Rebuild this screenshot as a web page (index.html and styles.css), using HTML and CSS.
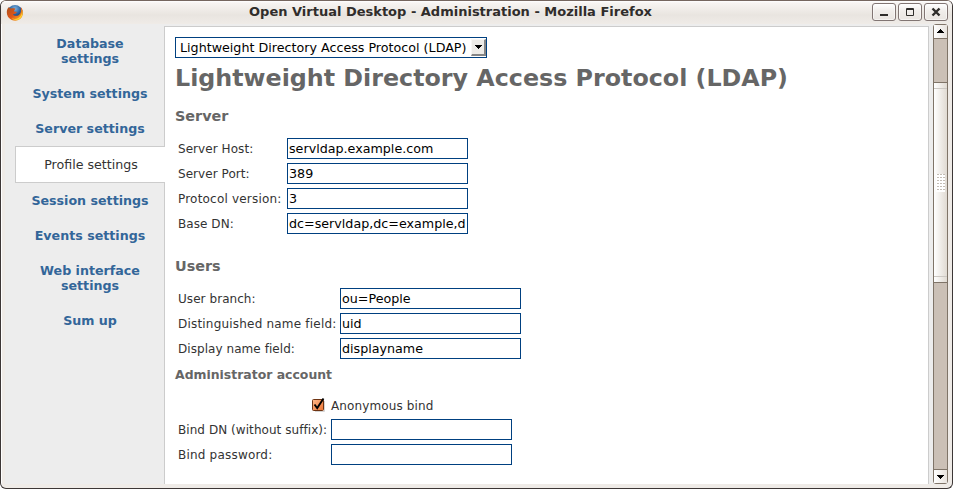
FILE: index.html
```html
<!DOCTYPE html>
<html lang="en">
<head>
<meta charset="utf-8">
<title>Open Virtual Desktop - Administration</title>
<link rel="stylesheet" href="styles.css">
</head>
<body>
<div class="window">
  <header class="titlebar">
    <svg class="logo" width="18" height="18" viewBox="0 0 18 18">
      <defs>
        <radialGradient id="globe" cx=".5" cy=".25" r=".7"><stop offset="0" stop-color="#7db4e4"/><stop offset=".5" stop-color="#2c639f"/><stop offset="1" stop-color="#112c5c"/></radialGradient>
        <linearGradient id="fox" x1="0" y1="0" x2="1" y2="1"><stop offset="0" stop-color="#a9501f"/><stop offset=".5" stop-color="#df5618"/><stop offset="1" stop-color="#ffc629"/></linearGradient>
      </defs>
      <circle cx="9" cy="8.5" r="7.6" fill="url(#globe)"/>
      <path d="M2.5 3.2C0 6 .5 11 2.8 13.7c3.300 3.800 9 4 12.200 .5 2.300-2.500 2.500-7 .7-9.900l-1.100-1c1 3 .4 6.500-2 7.900-2.200 1.300-5 .5-5.600-1l2.800-.7 1.200-1.500-3-.5c.1-1.500.8-2 1.700-2.800C7.500 4 6 4.200 5 4.500 4 4 3.500 3.800 2.500 3.200z" fill="url(#fox)"/>
      <path d="M15.300 4.500c1.500 4 0 7.500-3 9.500-2 1.200-4.500 1.200-6.500.3 2.500 2.300 6.500 2.200 8.800-.2 2.400-2.500 2.400-6.600.7-9.600z" fill="#ffd22e"/>
    </svg>
    <h1 class="title">Open Virtual Desktop - Administration - Mozilla Firefox</h1>
    <div class="controls">
      <span class="control"><svg width="22" height="16"><path d="M7 11h8" stroke="#2f2d2b" stroke-width="2"/></svg></span>
      <span class="control"><svg width="22" height="16"><path d="M7.500 4.500h7v7h-7zM7 5.500h8" stroke="#2f2d2b" fill="none"/></svg></span>
      <span class="control"><svg width="22" height="16"><path d="M7.500 4.500l7 7M14.500 4.500l-7 7" stroke="#2f2d2b" stroke-width="2.400"/></svg></span>
    </div>
  </header>
  <div class="page">
    <nav class="menu">
      <a class="item">Database<br>settings</a>
      <a class="item">System settings</a>
      <a class="item">Server settings</a>
      <a class="item active">Profile settings</a>
      <a class="item">Session settings</a>
      <a class="item">Events settings</a>
      <a class="item">Web interface<br>settings</a>
      <a class="item">Sum up</a>
    </nav>
    <main class="content">
      <div class="select"><span class="value">Lightweight Directory Access Protocol (LDAP)</span><span class="drop"><svg width="12" height="14"><path d="M3 5h7v1h-1v1h-1v1h-1v1h-1v-1h-1v-1h-1v-1h-1z" fill="#000"/></svg></span></div>
      <h1 class="heading">Lightweight Directory Access Protocol (LDAP)</h1>
      <h2 class="section">Server</h2>
      <div class="form server">
        <label>Server Host:</label><div class="field">servldap.example.com</div>
        <label>Server Port:</label><div class="field">389</div>
        <label class="wide">Protocol version:</label><div class="field">3</div>
        <label>Base DN:</label><div class="field">dc=servldap,dc=example,d</div>
      </div>
      <h2 class="section users-title">Users</h2>
      <div class="form users">
        <label>User branch:</label><div class="field">ou=People</div>
        <label class="wide">Distinguished name field:</label><div class="field">uid</div>
        <label>Display name field:</label><div class="field">displayname</div>
      </div>
      <h3 class="subsection">Administrator account</h3>
      <div class="form account">
        <span class="check"><svg width="14" height="15"><defs><linearGradient id="tick" x2="1" y2="1"><stop stop-color="#ffb98b"/><stop offset="1" stop-color="#ed7433"/></linearGradient></defs><path d="M12.500 4v10.500H3" stroke="#d5d5d5" fill="none"/><rect x=".5" y="2.500" width="11" height="11" rx="1" fill="url(#tick)" stroke="#6e3413"/><path d="M2.500 7.500l2.700 3.500L11.500 1.500" stroke="#000" stroke-width="1.900" fill="none"/></svg></span><label class="anonymous">Anonymous bind</label>
        <label>Bind DN (without suffix):</label><div class="field"></div>
        <label class="wide">Bind password:</label><div class="field"></div>
      </div>
    </main>
    <div class="scrollbar">
      <span class="arrow up"><svg width="13" height="13"><path d="M3 8h7v-1h-1v-1h-1v-1h-1v-1h-1v1h-1v1h-1v1h-1z" fill="#000"/></svg></span>
      <span class="track before"></span>
      <span class="thumb"><span class="grip"></span></span>
      <span class="track after"></span>
      <span class="arrow down"><svg width="13" height="13"><path d="M3 5h7v1h-1v1h-1v1h-1v1h-1v-1h-1v-1h-1v-1h-1z" fill="#000"/></svg></span>
    </div>
  </div>
</div>
</body>
</html>
```

FILE: styles.css
```css
* { box-sizing: border-box; }
html, body { height: 100%; margin: 0; overflow: hidden; }
body { background: #fff; font: 12px/15px "DejaVu Sans", sans-serif; color: #333; }
h1, h2, h3 { margin: 0; }
svg { display: block; }
.window { width: 953px; height: 489px; border: 1px solid #3d3736; border-top-color: #75665f; border-radius: 6px; background: #efebe7; box-shadow: inset 1px 1px #fff; padding: 0 4px 4px; overflow: hidden; }
.titlebar { height: 23px; display: flex; align-items: flex-start; margin: 0 -4px; padding-left: 5px; background: linear-gradient(#fff 0, #f7f4f2 2px, #e9e5e0 14px, #efebe7); }
.logo { margin-top: 3px; }
.title { flex: 1; margin-left: 5px; padding-top: 3px; text-align: center; font-size: 13px; line-height: 15px; color: #302d2b; white-space: nowrap; }
.controls { display: flex; gap: 2px; padding: 2px 4px 0 0; }
.control { width: 24px; height: 18px; border: 1px solid #817573; border-radius: 3px; background: linear-gradient(#fff, #f0edea 45%, #e9e5e1); box-shadow: inset 0 0 0 1px #fff8; }
.page { display: flex; height: 460px; background: #ededed; }
.menu { width: 159px; padding: 12px 0 0 10px; text-align: center; }
.item { display: block; margin-bottom: 20px; padding-left: 1px; font-size: 12.65px; font-weight: bold; line-height: 15px; color: #369; }
.item.active { height: 37px; margin: -10px -1px 10px 0; padding: 10px 0 0 1px; border: 1px solid #ccc; border-right: 0; background: #fff; color: #333; font-weight: normal; position: relative; }
.content { width: 765px; margin-top: 2px; padding: 10px; border: 1px solid #ccc; border-bottom: 0; background: #fff; }
.select { display: flex; justify-content: space-between; width: 312px; height: 21px; border: 1px solid #004080; padding: 1px 0 1px 4px; color: #000; font-size: 12.7px; line-height: 17px; white-space: nowrap; }
.drop { width: 15px; height: 17px; background: #edebe7; border: solid; border-width: 1px 2px 2px 1px; border-color: #f8f7f5 #858585 #858585 #f8f7f5; }
.heading { margin-top: 6px; font-size: 23.78px; line-height: 28px; color: #666; white-space: nowrap; }
.section { margin-top: 15px; font-size: 14.4px; line-height: 18px; color: #666; }
.form { display: grid; grid-auto-rows: 21px; row-gap: 4px; padding-left: 3px; line-height: 23px; letter-spacing: .06px; white-space: nowrap; }
.wide { letter-spacing: .2px; }
.server { grid-template-columns: 109px 181px; margin-top: 13px; }
.users { grid-template-columns: 162px 181px; margin-top: 13px; }
.account { grid-template-columns: 153px 181px; grid-template-rows: 20px; margin-top: 13px; }
.field { border: 1px solid #004080; padding: 0 1px; height: 21px; overflow: hidden; color: #000; font-size: 12.7px; line-height: 19px; letter-spacing: 0; }
.users-title { margin-top: 23px; }
.subsection { margin-top: 8px; font-size: 12.45px; line-height: 15px; color: #666; }
.check { justify-self: end; margin: 2px 5px 0 0; }
.anonymous { letter-spacing: .13px; }
.scrollbar { display: flex; flex-direction: column; width: 15px; height: 460px; margin-left: 4px; border: 1px solid #7f7468; border-radius: 3px; background: #cbc0b6; }
.arrow { height: 13px; flex: none; background: linear-gradient(90deg, #fff, #e8e3de); }
.up { border-bottom: 1px solid #7f7468; height: 14px; }
.down { border-top: 1px solid #7f7468; height: 14px; }
.before { height: 43px; }
.after { flex: 1; }
.thumb { height: 201px; display: flex; align-items: center; justify-content: center; border: solid #7f7468; border-width: 1px 0; background: linear-gradient(#ccc8c3, #ccc8c3) 0 5px / 100% 1px no-repeat, linear-gradient(#ccc8c3, #ccc8c3) 0 193px / 100% 1px no-repeat, linear-gradient(90deg, #fff, #e0dad2); }
.grip { width: 9px; height: 18px; background: conic-gradient(from 90deg at 1px 1px, #fff 270deg, #c4bdb5 0) 0 0 / 3px 3px; }
```
